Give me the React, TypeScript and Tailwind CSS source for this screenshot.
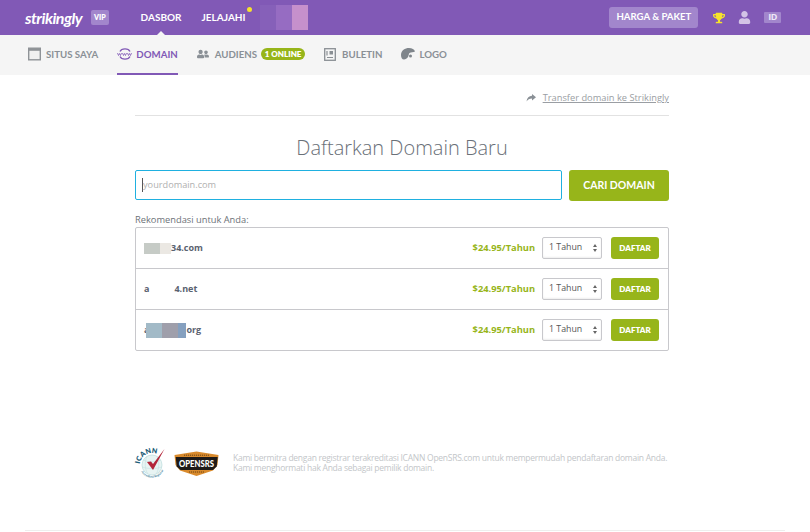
import { FaTrophy, FaUser, FaUserFriends } from 'react-icons/fa'

const lato = { fontFamily: 'Lato, sans-serif' }

function BrowserIcon() {
  return (
    <svg width="13" height="14" viewBox="0 0 13 14" className="shrink-0">
      <rect x="0.700" y="1.200" width="11.600" height="11.600" fill="#f0f0f0" stroke="#8f9397" strokeWidth="1.400" />
      <rect x="0.700" y="1.200" width="11.600" height="2.600" fill="#8f9397" />
    </svg>
  )
}

function WwwIcon() {
  return (
    <svg width="16" height="16" viewBox="0 0 16 16" className="shrink-0" fill="none" stroke="#8159b6">
      <path d="M3 5.500C4.500 2 11.500 2 13 5.500" strokeWidth="1.300" />
      <path d="M3 10.500C4.500 14 11.500 14 13 10.500" strokeWidth="1.300" />
      <path d="M0.500 7l1 2.500 1-2 1 2 1-2.500M5.500 7l1 2.500 1-2 1 2 1-2.500M10.500 7l1 2.500 1-2 1 2 1-2.500" strokeWidth="0.800" />
    </svg>
  )
}

function NewsIcon() {
  return (
    <svg width="12" height="13" viewBox="0 0 12 13" className="shrink-0" fill="none">
      <rect x="0.700" y="0.700" width="10.600" height="11.600" stroke="#8a8f94" strokeWidth="1.300" />
      <rect x="5.500" y="3" width="3.500" height="3.500" fill="#8a8f94" />
      <path d="M3 3v4.500M3 9.500h6" stroke="#8a8f94" strokeWidth="1.200" />
    </svg>
  )
}

function PaletteIcon() {
  return (
    <svg width="14" height="12" viewBox="0 0 14 12" className="shrink-0">
      <path d="M0 7C0 2.500 4 0 8 0c3 0 5.500 1.500 6 3.500-1.500 1-4 .5-5.500 1.500C7.500 5.800 8 7.500 7 9c-1 1.500-2.500 2.500-4 2.500C1 11.500 0 9.500 0 7z" fill="#7f858b" />
      <circle cx="9.500" cy="8" r="1.500" fill="#7f858b" />
    </svg>
  )
}

function IcannLogo() {
  return (
    <svg width="34" height="36" viewBox="0 0 34 36" className="shrink-0 overflow-visible">
      <defs>
        <path id="icann-top" d="M4.800 20A12.400 12.400 0 0 1 29 15" />
        <path id="icann-bottom" d="M5 22A12.600 12.600 0 0 0 29 22" />
      </defs>
      <circle cx="17" cy="18" r="10" fill="#e8f4f3" stroke="#bcdcdc" strokeWidth="0.700" />
      <path d="M8 13c6 2.500 12 2.500 18 0M7 20c7 2 13 2 20 0M12 9c-2.500 6-2.500 13 1 18M22 9c2.500 6 2.500 13-1 18" fill="none" stroke="#c4e0e0" strokeWidth="0.600" />
      <path d="M12 15L16 14.500 18 17 29.500 2 18 23z" fill="#b3263a" />
      <text fontSize="7" fontWeight="800" fill="#1f5f7a" style={lato}>
        <textPath href="#icann-top" startOffset="3">ICANN</textPath>
      </text>
      <text fontSize="3" fontWeight="700" fill="#3f7f9a" style={lato}>
        <textPath href="#icann-bottom" startOffset="3">Accredited Registrar</textPath>
      </text>
    </svg>
  )
}

function OpenSrsLogo() {
  return (
    <svg width="45" height="25" viewBox="0 0 45 25" className="shrink-0">
      <path d="M0.500 4L22.500 0.500 44.500 4 43.500 14 39 19.500 22.500 25 6 19.500 1.500 14z" fill="#d98a2c" />
      <path d="M1.700 6H43.700L42.700 15.500 39 19H6.500L2.700 15.500z" fill="#1e1a18" />
      <path d="M10 4.200H35M15 21H30" stroke="#6b4313" strokeWidth="1" strokeDasharray="1.200 0.800" />
      <text x="5" y="13.500" fontSize="8" fontWeight="900" textLength="35" lengthAdjust="spacingAndGlyphs" transform="scale(1 1.200)" fill="#fff" style={lato}>OPENSRS</text>
    </svg>
  )
}

function SubTab({ icon, label, active, gap }: { icon: React.ReactNode; label: string; active?: boolean; gap: string }) {
  return (
    <div className={`flex h-10 items-center border-b-2 ${gap} ${active ? 'border-[#8159b6] text-[#8159b6]' : 'border-transparent text-[#8a9096]'}`}>
      {icon}
      <span className="text-[9.700px] font-bold">{label}</span>
    </div>
  )
}

function DomainRow({ name }: { name: React.ReactNode }) {
  return (
    <div className="flex h-[41px] items-center border-b border-[#c8c8cc] pl-2 pr-[9px] last:h-[40px] last:border-b-0">
      <div className="flex-1 text-[9px] font-bold text-[#5a6270]">{name}</div>
      <span className="text-[9.300px] font-bold text-[#97b51a]">$24.95/Tahun</span>
      <div className="ml-[7px] flex h-[22px] w-[60px] items-center justify-between rounded-[2px] border border-[#c8c8cc] bg-white pl-[6px] pr-[3px] text-[8.800px] text-[#555] shadow-[inset_0_-1px_2px_#eeeeee]">
        1 Tahun
        <span className="flex flex-col gap-[2px] pr-[1px]">
          <span className="h-0 w-0 border-x-[2.500px] border-b-[3px] border-x-transparent border-b-[#666]" />
          <span className="h-0 w-0 border-x-[2.500px] border-t-[3px] border-x-transparent border-t-[#666]" />
        </span>
      </div>
      <button className="ml-[9px] h-[22px] w-12 rounded-[3px] bg-[#97b51a] text-[8px] font-extrabold text-white" style={lato}>
        DAFTAR
      </button>
    </div>
  )
}

export default function App() {
  return (
    <div className="h-[532px] w-[810px] overflow-hidden bg-white" style={{ fontFamily: '"Open Sans", sans-serif' }}>
      <header className="flex h-[35px] items-center bg-[#8159b6] pl-[25px] pr-[29px] text-white" style={lato}>
        <span className="w-[66px] text-[16px] font-bold italic leading-none tracking-[-0.5px]">strikingly</span>
        <span className="rounded-[2px] bg-[#a286cc] px-[3px] py-[3px] text-[7px] font-extrabold leading-[9px]">VIP</span>
        <nav className="ml-[32px] flex items-center gap-[20px] text-[10px] font-bold">
          <span className="relative">
            DASBOR
            <span className="absolute left-1/2 top-[21px] h-0 w-0 -translate-x-1/2 border-x-[7px] border-b-[7px] border-x-transparent border-b-[#f5f5f5]" />
          </span>
          <span className="relative">
            JELAJAHI
            <span className="absolute -right-[6px] -top-[3px] h-[5px] w-[5px] rounded-full bg-[#f6e32b]" />
          </span>
        </nav>
        {/* blurred out block in the screenshot */}
        <div className="ml-[14px] flex h-[25px] w-12 self-center">
          <div className="w-4 bg-[#8660b9]" />
          <div className="w-4 bg-[#966cc2]" />
          <div className="w-4 bg-[#c690cc]" />
        </div>
        <div className="ml-auto flex h-[21px] w-[89px] items-center justify-center rounded-[3px] bg-[#a286cc] text-[9.600px] font-bold">HARGA &amp; PAKET</div>
        <FaTrophy size={12} className="ml-[15px] text-[#f6e32b]" />
        <FaUser size={13} className="ml-[13px] text-[#d3c3e6]" />
        <span className="ml-[13px] rounded-[1px] bg-[#a286cc] px-[4px] text-[8px] font-extrabold leading-[11px] text-[#efe8f7]">ID</span>
      </header>

      <div className="flex h-10 items-center gap-[19px] bg-[#f5f5f5] pl-[28px]" style={lato}>
        <SubTab icon={<BrowserIcon />} label="SITUS SAYA" gap="gap-[5px]" />
        <SubTab icon={<WwwIcon />} label="DOMAIN" active gap="gap-[3px]" />
        <div className="flex items-center">
          <SubTab icon={<FaUserFriends size={12} className="text-[#8a9096]" />} label="AUDIENS" gap="gap-[6px]" />
          <span className="ml-[4px] mt-[-2px] w-[44px] rounded-full bg-[#97b51a] text-center text-[8px] font-extrabold leading-[12px] text-white">1 ONLINE</span>
        </div>
        <SubTab icon={<NewsIcon />} label="BULETIN" gap="gap-[6px]" />
        <SubTab icon={<PaletteIcon />} label="LOGO" gap="gap-[4px]" />
      </div>

      <main className="ml-[135px] w-[534px]">
        <div className="flex h-[41px] items-center justify-end gap-[7px] border-b border-[#e2e2e2] pt-[6px] text-[9.300px] text-[#9a9ea3]">
          <svg width="10" height="8" viewBox="0 0 10 8">
            <path d="M6 0l4 3.200L6 6.500V4.500C3.500 4.500 1.800 5.500 .5 7.500 1 4 3 2 6 1.800z" fill="#8a9096" />
          </svg>
          <span className="underline">Transfer domain ke Strikingly</span>
        </div>

        <h1 className="mt-[17px] text-center text-[20px] font-light leading-[30px] text-[#6a7078]">Daftarkan Domain Baru</h1>

        <div className="mt-[7px] flex justify-between">
          <div className="flex h-[30px] w-[427px] items-center rounded-[2px] border border-[#1fb0e0] bg-white pl-[6px] text-[9.200px] text-[#b0b0b0]">
            <span className="h-[14px] w-px bg-[#555]" />
            yourdomain.com
          </div>
          <button className="h-[31px] w-[100px] rounded-[3px] bg-[#97b51a] text-[10.500px] font-bold text-white" style={lato}>
            CARI DOMAIN
          </button>
        </div>

        <p className="mt-[12px] text-[9.300px] leading-[14px] text-[#6d7278]">Rekomendasi untuk Anda:</p>

        <div className="rounded-[2px] border border-[#c8c8cc]">
          <DomainRow
            name={
              <div className="flex items-center">
                <span className="h-[11px] w-4 bg-[#c6cbc6]" />
                <span className="h-[11px] w-[11px] bg-[#ebe8e3]" />
                <span>34.com</span>
              </div>
            }
          />
          <DomainRow
            name={
              <div className="flex items-center">
                <span>a</span>
                <span className="h-[11px] w-[25px]" />
                <span>4.net</span>
              </div>
            }
          />
          <DomainRow
            name={
              <div className="flex items-center">
                <span>a</span>
                <span className="-ml-[3px] h-[15px] w-4 bg-[#a2bac7]" />
                <span className="h-[15px] w-4 bg-[#9f9fab]" />
                <span className="h-[15px] w-2 bg-[#85a0bf]" />
                <span>org</span>
              </div>
            }
          />
        </div>

        <div className="mt-[96px] flex items-start">
          <IcannLogo />
          <div className="ml-[5px] mt-[4px]">
            <OpenSrsLogo />
          </div>
          <p className="ml-[14px] mt-[6px] whitespace-nowrap text-[8.500px] leading-[10px] tracking-[-0.26px] text-[#c3c6c9]">
            Kami bermitra dengan registrar terakreditasi ICANN OpenSRS.com untuk mempermudah pendaftaran domain Anda.
            <br />
            Kami menghormati hak Anda sebagai pemilik domain.
          </p>
        </div>
      </main>
      <div className="mx-[25px] mt-[47px] border-t border-[#eeeeee]" />
    </div>
  )
}
